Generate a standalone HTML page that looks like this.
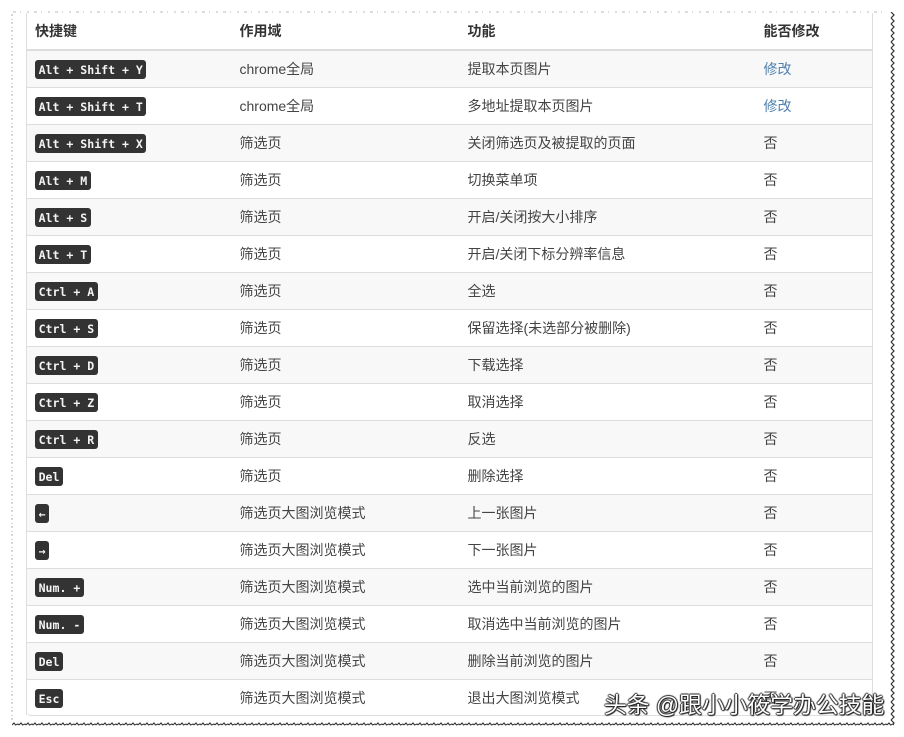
<!DOCTYPE html>
<html lang="zh"><head><meta charset="utf-8">
<style>
html,body{margin:0;padding:0;background:#fff}
#p{position:relative;width:904px;height:737px;overflow:hidden;background:#fff;font:14px/20px "Liberation Sans","Noto Sans CJK SC",sans-serif;color:#444}
.vl{position:absolute;top:13px;width:1px;height:702px;background:#ddd}
.r{position:absolute;left:27px;width:845px;height:37px;border-top:1px solid #ddd;box-sizing:border-box}
.o{background:#f8f8f8}
.c{position:absolute;top:8px;white-space:nowrap}
.a{left:8px;top:9px;line-height:0}.b{left:212.5px}.d{left:440.5px}.e{left:736.5px}
.l{color:#4f7fad}
.k{display:inline-block;vertical-align:top;height:19px;padding:0 3.6px;background:#333;color:#f4f4f4;border-radius:3px;font:bold 11.55px/20px "DejaVu Sans Mono","Liberation Mono",monospace;white-space:pre}
.h{font-weight:bold;color:#333}
#w{position:absolute;left:604px;top:690px;font:22.8px/30px "Liberation Sans","Noto Sans CJK SC",sans-serif;color:#fff;white-space:nowrap;text-shadow:1px 1px 1px #222,-1px 0 1px #222,0 -1px 1px #222,1px 0 1px #222,0 1px 1px #222}
svg{position:absolute;left:0;top:0}
</style></head><body><div id="p">
<div class="c h" style="left:35px;top:21px">快捷键</div>
<div class="c h" style="left:239.5px;top:21px">作用域</div>
<div class="c h" style="left:467.5px;top:21px">功能</div>
<div class="c h" style="left:763.5px;top:21px">能否修改</div>
<div style="position:absolute;left:27px;top:49px;width:845px;height:2px;background:#ddd"></div>

<div class="r o" style="top:51px;border-top:0;height:36px"><div class="c a"><span class="k">Alt + Shift + Y</span></div><div class="c b">chrome全局</div><div class="c d">提取本页图片</div><div class="c e l">修改</div></div>
<div class="r" style="top:87px"><div class="c a"><span class="k">Alt + Shift + T</span></div><div class="c b">chrome全局</div><div class="c d">多地址提取本页图片</div><div class="c e l">修改</div></div>
<div class="r o" style="top:124px"><div class="c a"><span class="k">Alt + Shift + X</span></div><div class="c b">筛选页</div><div class="c d">关闭筛选页及被提取的页面</div><div class="c e">否</div></div>
<div class="r" style="top:161px"><div class="c a"><span class="k">Alt + M</span></div><div class="c b">筛选页</div><div class="c d">切换菜单项</div><div class="c e">否</div></div>
<div class="r o" style="top:198px"><div class="c a"><span class="k">Alt + S</span></div><div class="c b">筛选页</div><div class="c d">开启/关闭按大小排序</div><div class="c e">否</div></div>
<div class="r" style="top:235px"><div class="c a"><span class="k">Alt + T</span></div><div class="c b">筛选页</div><div class="c d">开启/关闭下标分辨率信息</div><div class="c e">否</div></div>
<div class="r o" style="top:272px"><div class="c a"><span class="k">Ctrl + A</span></div><div class="c b">筛选页</div><div class="c d">全选</div><div class="c e">否</div></div>
<div class="r" style="top:309px"><div class="c a"><span class="k">Ctrl + S</span></div><div class="c b">筛选页</div><div class="c d">保留选择(未选部分被删除)</div><div class="c e">否</div></div>
<div class="r o" style="top:346px"><div class="c a"><span class="k">Ctrl + D</span></div><div class="c b">筛选页</div><div class="c d">下载选择</div><div class="c e">否</div></div>
<div class="r" style="top:383px"><div class="c a"><span class="k">Ctrl + Z</span></div><div class="c b">筛选页</div><div class="c d">取消选择</div><div class="c e">否</div></div>
<div class="r o" style="top:420px"><div class="c a"><span class="k">Ctrl + R</span></div><div class="c b">筛选页</div><div class="c d">反选</div><div class="c e">否</div></div>
<div class="r" style="top:457px"><div class="c a"><span class="k">Del</span></div><div class="c b">筛选页</div><div class="c d">删除选择</div><div class="c e">否</div></div>
<div class="r o" style="top:494px"><div class="c a"><span class="k">←</span></div><div class="c b">筛选页大图浏览模式</div><div class="c d">上一张图片</div><div class="c e">否</div></div>
<div class="r" style="top:531px"><div class="c a"><span class="k">→</span></div><div class="c b">筛选页大图浏览模式</div><div class="c d">下一张图片</div><div class="c e">否</div></div>
<div class="r o" style="top:568px"><div class="c a"><span class="k">Num. +</span></div><div class="c b">筛选页大图浏览模式</div><div class="c d">选中当前浏览的图片</div><div class="c e">否</div></div>
<div class="r" style="top:605px"><div class="c a"><span class="k">Num. -</span></div><div class="c b">筛选页大图浏览模式</div><div class="c d">取消选中当前浏览的图片</div><div class="c e">否</div></div>
<div class="r o" style="top:642px"><div class="c a"><span class="k">Del</span></div><div class="c b">筛选页大图浏览模式</div><div class="c d">删除当前浏览的图片</div><div class="c e">否</div></div>
<div class="r" style="top:679px;height:37px;border-bottom:1px solid #ddd;border-radius:0 0 4px 4px"><div class="c a"><span class="k">Esc</span></div><div class="c b">筛选页大图浏览模式</div><div class="c d">退出大图浏览模式</div><div class="c e">否</div></div>
<div class="vl" style="left:26px"></div>
<div class="vl" style="left:872px"></div>

<svg width="904" height="737" viewBox="0 0 904 737" fill="none">
<defs>
<pattern id="zr" width="5" height="6" patternUnits="userSpaceOnUse" x="890" y="12"><path d="M1 0L4 3L1 6" stroke="#333" stroke-width="1.2"/></pattern>
<pattern id="zb" width="7" height="5" patternUnits="userSpaceOnUse" x="12" y="722"><path d="M0 3L2 1L3.5 3L6 2L7 3" stroke="#333" stroke-width="1.1"/></pattern>
</defs>
<path d="M13 12H888" stroke="#bbb" stroke-dasharray="3 4 1 6 2 5" stroke-width="1"/>
<path d="M12 14V722" stroke="#bbb" stroke-dasharray="2 3 1 2" stroke-width="1.2"/>
<rect x="890" y="12" width="5" height="712" fill="url(#zr)"/>
<rect x="12" y="722" width="882" height="5" fill="url(#zb)"/>
</svg>
<div id="w">头条 @跟小小筱学办公技能</div>
</div></body></html>
